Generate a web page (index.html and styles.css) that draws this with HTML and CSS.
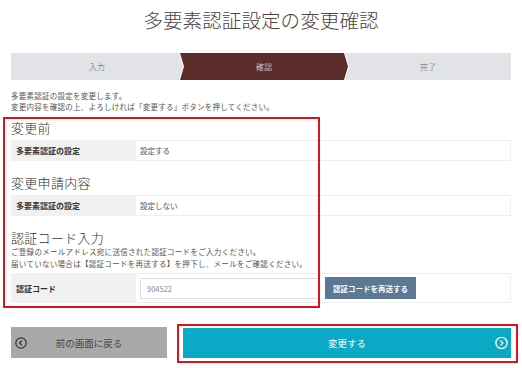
FILE: index.html
```html
<!DOCTYPE html>
<html lang="ja">
<head>
<meta charset="utf-8">
<link rel="stylesheet" href="styles.css">
</head>
<body>
<div class="page">
  <h1 class="title">多要素認証設定の変更確認</h1>
  <div class="steps">
    <div class="step step-first">入力</div>
    <div class="step step-mid step-active">確認</div>
    <div class="step step-last">完了</div>
  </div>
  <p class="lead">多要素認証の設定を変更します。<br>変更内容を確認の上、よろしければ「変更する」ボタンを押してください。</p>

  <h2 class="heading h-first">変更前</h2>
  <div class="row">
    <div class="row-label">多要素認証の設定</div>
    <div class="row-value">設定する</div>
  </div>

  <h2 class="heading">変更申請内容</h2>
  <div class="row">
    <div class="row-label">多要素認証の設定</div>
    <div class="row-value">設定しない</div>
  </div>

  <h2 class="heading">認証コード入力</h2>
  <p class="note">ご登録のメールアドレス宛に送信された認証コードをご入力ください。<br>届いていない場合は【認証コードを再送する】を押下し、メールをご確認ください。</p>
  <div class="row row-tall">
    <div class="row-label">認証コード</div>
    <div class="row-value value-form">
      <div class="code-input">904522</div>
      <div class="resend">認証コードを再送する</div>
    </div>
  </div>

  <div class="actions">
    <div class="btn btn-back">
      <svg class="btn-icon icon-left" width="12" height="12" viewBox="0 0 12 12"><circle cx="6" cy="6" r="5.2" fill="none" stroke="#333" stroke-width="1.2"/><path d="M6.9 3.6 L4.6 6 L6.9 8.4" fill="none" stroke="#333" stroke-width="1.2"/></svg>
      <span>前の画面に戻る</span>
    </div>
    <div class="btn btn-submit">
      <span>変更する</span>
      <svg class="btn-icon icon-right" width="13" height="13" viewBox="0 0 13 13"><circle cx="6.5" cy="6.5" r="5.6" fill="none" stroke="#fff" stroke-width="1.3"/><path d="M5.4 3.9 L7.9 6.5 L5.4 9.1" fill="none" stroke="#fff" stroke-width="1.3"/></svg>
    </div>
  </div>
</div>
<div class="mark mark-a"></div>
<div class="mark mark-b"></div>
</body>
</html>
```
FILE: styles.css
```css
* { box-sizing: border-box; }
html, body { margin: 0; padding: 0; background: #fff; }
body {
  font-family: "Noto Sans CJK JP", "Noto Sans", sans-serif;
  color: #333;
  width: 522px;
  height: 368px;
  overflow: hidden;
  position: relative;
}
.page { padding: 0 11px 0 11px; }
.title {
  margin: 7px 0 0 0;
  font-size: 19.5px;
  line-height: 26px;
  font-weight: 300;
  text-align: center;
  color: #4e4242;
  letter-spacing: 0.1px;
}
.steps {
  display: flex;
  margin-top: 20px;
  height: 27px;
}
.step {
  flex: 1;
  display: flex;
  align-items: center;
  justify-content: center;
  font-size: 8px;
  font-weight: 300;
  color: #666;
  background: #e1e3e7;
}
.step-first {
  clip-path: polygon(0 0, calc(100% - 4px) 0, 100% 50%, calc(100% - 4px) 100%, 0 100%);
  flex-basis: 172px;
  flex-grow: 0;
}
.step-mid {
  margin-left: -3px;
  clip-path: polygon(0 0, calc(100% - 4px) 0, 100% 50%, calc(100% - 4px) 100%, 0 100%, 4px 50%);
  flex-basis: 168px;
  flex-grow: 0;
}
.step-last {
  margin-left: -3px;
  clip-path: polygon(0 0, 100% 0, 100% 100%, 0 100%, 4px 50%);
}
.step-active { background: #5b2c2a; color: #fff; }
.lead {
  margin: 10px 0 0 0;
  font-size: 7.5px;
  line-height: 11px;
  color: #555;
  letter-spacing: 0.25px;
}
.heading {
  margin: 14px 0 0 0;
  font-size: 13px;
  line-height: 16px;
  font-weight: 300;
  color: #333;
  letter-spacing: 0.3px;
}
.h-first { margin-top: 8px; }
.row {
  display: flex;
  margin-top: 4px;
  height: 21px;
  border: 1px solid #eeeeee;
}
.row-label {
  width: 125px;
  margin: -1px 0 -1px -1px;
  background: #f1f1f1;
  display: flex;
  align-items: center;
  padding-left: 5px;
  font-size: 8px;
  font-weight: 700;
  color: #333;
}
.row-value {
  display: flex;
  align-items: center;
  padding-left: 4px;
  font-size: 7.5px;
  color: #555;
}
.note {
  margin: 0;
  font-size: 7.5px;
  line-height: 11.5px;
  color: #555;
  letter-spacing: 0.3px;
}
.row-tall { height: 30px; margin-top: 4px; }
.value-form { gap: 6px; }
.code-input {
  width: 179px;
  height: 21px;
  border: 1px solid #dddddd;
  display: flex;
  align-items: center;
  padding-left: 6px;
  font-size: 7.5px;
  color: #888;
}
.resend {
  width: 91px;
  height: 22px;
  background: #5b7896;
  color: #fff;
  font-size: 7.5px;
  font-weight: 700;
  display: flex;
  align-items: center;
  justify-content: center;
}
.actions {
  display: flex;
  gap: 16px;
  margin-top: 24px;
}
.btn {
  height: 31px;
  display: flex;
  align-items: center;
  justify-content: center;
  position: relative;
  font-size: 9.5px;
}
.btn-back {
  width: 156px;
  background: #a9a9a9;
  color: #444;
}
.btn-submit {
  flex: 1;
  background: #0aa9c6;
  color: #fff;
  margin-top: 1px;
  height: 30px;
}
.btn-icon { position: absolute; top: 50%; transform: translateY(-50%); }
.icon-left { left: 4px; }
.icon-right { right: 3px; }
.mark {
  position: absolute;
  border: 2px solid #d8141c;
  pointer-events: none;
}
.mark-a { left: 3px; top: 117px; width: 317px; height: 191px; }
.mark-b { left: 177px; top: 324px; width: 341px; height: 39px; }
```
